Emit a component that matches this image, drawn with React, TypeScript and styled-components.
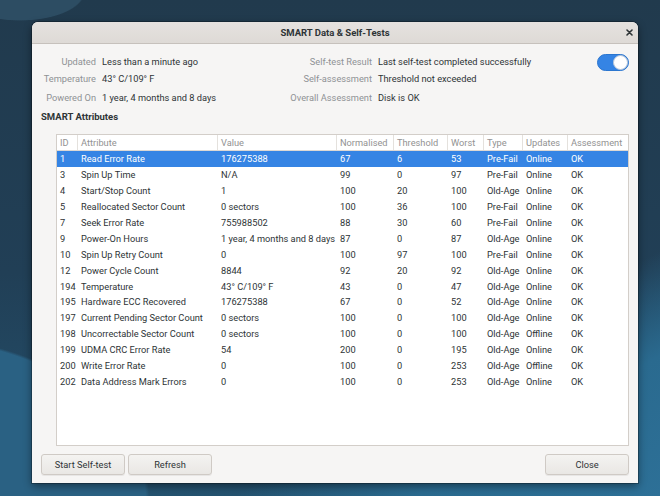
import styled, { createGlobalStyle } from 'styled-components'

const FONT = `Roboto, "Liberation Sans", sans-serif`
const TEXT = '#2e3436'
const DIM = '#8f9294'
const COLS = '21px 140px 119px 57px 54px 36px 39px 45px 59px'

const GlobalStyle = createGlobalStyle`
  html, body {
    margin: 0;
    padding: 0;
  }
  body {
    width: 660px;
    height: 496px;
    overflow: hidden;
    font-family: ${FONT};
    color: ${TEXT};
  }
`

const summary = [
  ['Updated', 'Less than a minute ago', 'Self-test Result', 'Last self-test completed successfully'],
  ['Temperature', '43° C/109° F', 'Self-assessment', 'Threshold not exceeded'],
  ['Powered On', '1 year, 4 months and 8 days', 'Overall Assessment', 'Disk is OK'],
]

const headers = ['ID', 'Attribute', 'Value', 'Normalised', 'Threshold', 'Worst', 'Type', 'Updates', 'Assessment']

const attributes = [
  ['1', 'Read Error Rate', '176275388', '67', '6', '53', 'Pre-Fail', 'Online', 'OK'],
  ['3', 'Spin Up Time', 'N/A', '99', '0', '97', 'Pre-Fail', 'Online', 'OK'],
  ['4', 'Start/Stop Count', '1', '100', '20', '100', 'Old-Age', 'Online', 'OK'],
  ['5', 'Reallocated Sector Count', '0 sectors', '100', '36', '100', 'Pre-Fail', 'Online', 'OK'],
  ['7', 'Seek Error Rate', '755988502', '88', '30', '60', 'Pre-Fail', 'Online', 'OK'],
  ['9', 'Power-On Hours', '1 year, 4 months and 8 days', '87', '0', '87', 'Old-Age', 'Online', 'OK'],
  ['10', 'Spin Up Retry Count', '0', '100', '97', '100', 'Pre-Fail', 'Online', 'OK'],
  ['12', 'Power Cycle Count', '8844', '92', '20', '92', 'Old-Age', 'Online', 'OK'],
  ['194', 'Temperature', '43° C/109° F', '43', '0', '47', 'Old-Age', 'Online', 'OK'],
  ['195', 'Hardware ECC Recovered', '176275388', '67', '0', '52', 'Old-Age', 'Online', 'OK'],
  ['197', 'Current Pending Sector Count', '0 sectors', '100', '0', '100', 'Old-Age', 'Online', 'OK'],
  ['198', 'Uncorrectable Sector Count', '0 sectors', '100', '0', '100', 'Old-Age', 'Offline', 'OK'],
  ['199', 'UDMA CRC Error Rate', '54', '200', '0', '195', 'Old-Age', 'Online', 'OK'],
  ['200', 'Write Error Rate', '0', '100', '0', '253', 'Old-Age', 'Offline', 'OK'],
  ['202', 'Data Address Mark Errors', '0', '100', '0', '253', 'Old-Age', 'Online', 'OK'],
]

export default function App() {
  return (
    <>
      <GlobalStyle />
      <Desktop>
        <Dialog>
          <HeaderBar>
            <span />
            <Title>SMART Data &amp; Self-Tests</Title>
            <CloseButton>
              <svg width="7" height="7" viewBox="0 0 7 7">
                <path d="M1 1 L6 6 M6 1 L1 6" stroke={TEXT} strokeWidth="1.6" strokeLinecap="round" />
              </svg>
            </CloseButton>
          </HeaderBar>
          <Body>
            <InfoGrid>
              {summary.map(([l1, v1, l2, v2], i) => (
                <InfoRow key={l1}>
                  <Label>{l1}</Label>
                  <Value>{v1}</Value>
                  <Label>{l2}</Label>
                  <Value>{v2}</Value>
                  {i === 0 ? (
                    <Switch>
                      <Knob />
                    </Switch>
                  ) : (
                    <span />
                  )}
                </InfoRow>
              ))}
            </InfoGrid>
            <SectionTitle>SMART Attributes</SectionTitle>
            <TableFrame>
              <HeaderRow>
                {headers.map((h) => (
                  <HeaderCell key={h}>{h}</HeaderCell>
                ))}
              </HeaderRow>
              {attributes.map((row, i) => (
                <Row key={row[0]} $selected={i === 0}>
                  {row.map((cell, j) => (
                    <Cell key={j}>{cell}</Cell>
                  ))}
                </Row>
              ))}
            </TableFrame>
            <ButtonBar>
              <Button>Start Self-test</Button>
              <Button>Refresh</Button>
              <Spacer />
              <Button>Close</Button>
            </ButtonBar>
          </Body>
        </Dialog>
      </Desktop>
    </>
  )
}

const Desktop = styled.div`
  width: 660px;
  height: 496px;
  box-sizing: border-box;
  padding: 22px 22px 0 32px;
  background:
    radial-gradient(ellipse 90px 40px at 20px -8px, #2d4d63 0 70%, transparent 72%),
    radial-gradient(ellipse 380px 260px at -90px 500px, #2a6183 0 62%, transparent 63%),
    linear-gradient(150deg, transparent 0 72%, #2a6a8f 84%, #2d7097 100%),
    linear-gradient(180deg, #213a4d 0%, #213f56 55%, #24526f 100%);
`

const Dialog = styled.div`
  width: 606px;
  height: 461px;
  display: flex;
  flex-direction: column;
  background: #f6f5f4;
  border-radius: 6px 6px 0 0;
  box-shadow: 0 0 0 1px rgba(0, 0, 0, 0.25), 0 3px 9px rgba(0, 0, 0, 0.45);
  overflow: hidden;
`

const HeaderBar = styled.header`
  flex: none;
  height: 22px;
  box-sizing: border-box;
  display: grid;
  grid-template-columns: 1fr auto 1fr;
  align-items: center;
  background: linear-gradient(#e5e2df, #dedad6);
  border-bottom: 1px solid #c6c1bc;
`

const Title = styled.span`
  font-size: 9.5px;
  font-weight: 700;
  color: ${TEXT};
`

const CloseButton = styled.span`
  justify-self: end;
  display: flex;
  align-items: center;
  justify-content: center;
  width: 14px;
  height: 14px;
  margin-right: 2px;
`

const Body = styled.div`
  flex: 1;
  display: flex;
  flex-direction: column;
  padding: 7px 9px 8px;
  min-height: 0;
`

const InfoGrid = styled.div`
  display: flex;
  flex-direction: column;
`

const InfoRow = styled.div`
  display: grid;
  grid-template-columns: 55px 181px 83px 1fr auto;
  column-gap: 6px;
  height: 18.5px;
  align-items: center;
  font-size: 9.25px;
`

const Label = styled.span`
  text-align: right;
  white-space: nowrap;
  color: ${DIM};
`

const Value = styled.span`
  white-space: nowrap;
  color: ${TEXT};
`

const Switch = styled.span`
  align-self: start;
  margin-top: 3px;
  width: 32px;
  height: 17px;
  box-sizing: border-box;
  border-radius: 9px;
  background: #3584e4;
  border: 1px solid #2b76cf;
  display: flex;
  justify-content: flex-end;
  align-items: center;
  padding: 0 0 0 0;
`

const Knob = styled.span`
  width: 15px;
  height: 15px;
  box-sizing: border-box;
  border-radius: 50%;
  background: #ffffff;
  border: 1px solid #b9c7d8;
`

const SectionTitle = styled.div`
  margin-top: 3px;
  height: 14px;
  line-height: 14px;
  font-size: 9.5px;
  font-weight: 700;
  color: ${TEXT};
`

const TableFrame = styled.div`
  flex: 1;
  margin: 10.5px 0 0 15px;
  background: #ffffff;
  border: 1px solid #d3cec9;
  display: flex;
  flex-direction: column;
  min-height: 0;
  overflow: hidden;
`

const HeaderRow = styled.div`
  display: grid;
  grid-template-columns: ${COLS};
  height: 15px;
  border-bottom: 1px solid #dcd8d4;
`

const HeaderCell = styled.div`
  padding: 0 3px;
  display: flex;
  align-items: center;
  font-size: 9.25px;
  color: #929292;
  white-space: nowrap;
  overflow: hidden;
  border-right: 1px solid #e4e1dd;

  &:last-child {
    border-right: none;
  }
`

const Row = styled.div<{ $selected?: boolean }>`
  display: grid;
  grid-template-columns: ${COLS};
  height: 15.9px;
  flex: none;
  background: ${(p) => (p.$selected ? '#3584e4' : 'transparent')};
  color: ${(p) => (p.$selected ? '#ffffff' : TEXT)};
`

const Cell = styled.div`
  padding: 0 3px;
  display: flex;
  align-items: center;
  font-size: 9.25px;
  white-space: nowrap;
`

const ButtonBar = styled.div`
  flex: none;
  display: flex;
  gap: 3px;
  margin-top: 8px;
  height: 21px;
`

const Spacer = styled.div`
  flex: 1;
`

const Button = styled.button`
  width: 84px;
  height: 21px;
  box-sizing: border-box;
  border: 1px solid #cfcac5;
  border-radius: 3px;
  background: linear-gradient(#f4f3f1, #e9e7e4);
  box-shadow: 0 1px 0 rgba(0, 0, 0, 0.06);
  font-family: ${FONT};
  font-size: 9.25px;
  color: ${TEXT};
  padding: 0;
`
